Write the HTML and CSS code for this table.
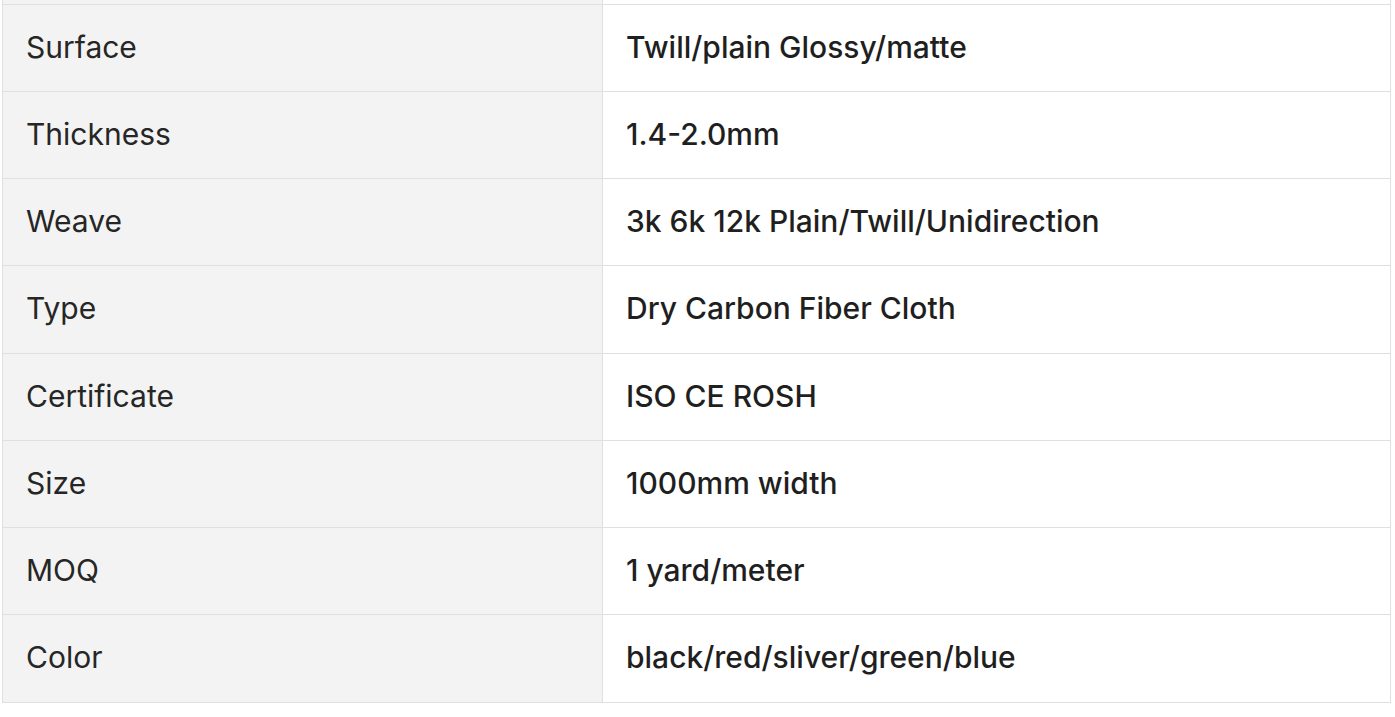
FILE: index.html
```html
<!DOCTYPE html>
<html>
<head>
<meta charset="utf-8">
<link rel="stylesheet" href="styles.css">
</head>
<body>
<div class="wrap">
<table class="spec">
<tbody>
<tr class="cut"><td class="k"></td><td class="v"></td></tr>
<tr><td class="k">Surface</td><td class="v">Twill/plain Glossy/matte</td></tr>
<tr><td class="k">Thickness</td><td class="v">1.4-2.0mm</td></tr>
<tr><td class="k">Weave</td><td class="v">3k 6k 12k Plain/Twill/Unidirection</td></tr>
<tr><td class="k">Type</td><td class="v">Dry Carbon Fiber Cloth</td></tr>
<tr><td class="k">Certificate</td><td class="v">ISO CE ROSH</td></tr>
<tr><td class="k">Size</td><td class="v">1000mm width</td></tr>
<tr><td class="k">MOQ</td><td class="v">1 yard/meter</td></tr>
<tr><td class="k">Color</td><td class="v">black/red/sliver/green/blue</td></tr>
</tbody>
</table>
</div>
</body>
</html>
```
FILE: styles.css
```css
html, body {
  margin: 0;
  padding: 0;
  background: #fff;
  overflow: hidden;
}
body {
  font-family: Inter, "Noto Sans", sans-serif;
  color: #222;
}
.wrap {
  padding: 0 4px 0 2px;
}
.spec {
  width: 1389px;
  border-collapse: collapse;
  table-layout: fixed;
}
.spec td {
  border: 1px solid #e0e0e0;
  height: 87.25px;
  padding: 0 23px 2px;
  font-size: 30px;
  line-height: 1.2;
  box-sizing: border-box;
}
.spec tr.cut td {
  height: 4px;
  padding: 0;
  border-top: none;
}
.spec .k {
  width: 600px;
  background: #f3f3f3;
  color: #262626;
  font-weight: 400;
}
.spec .v {
  background: #fff;
  color: #1f1f1f;
  font-weight: 500;
}
```
